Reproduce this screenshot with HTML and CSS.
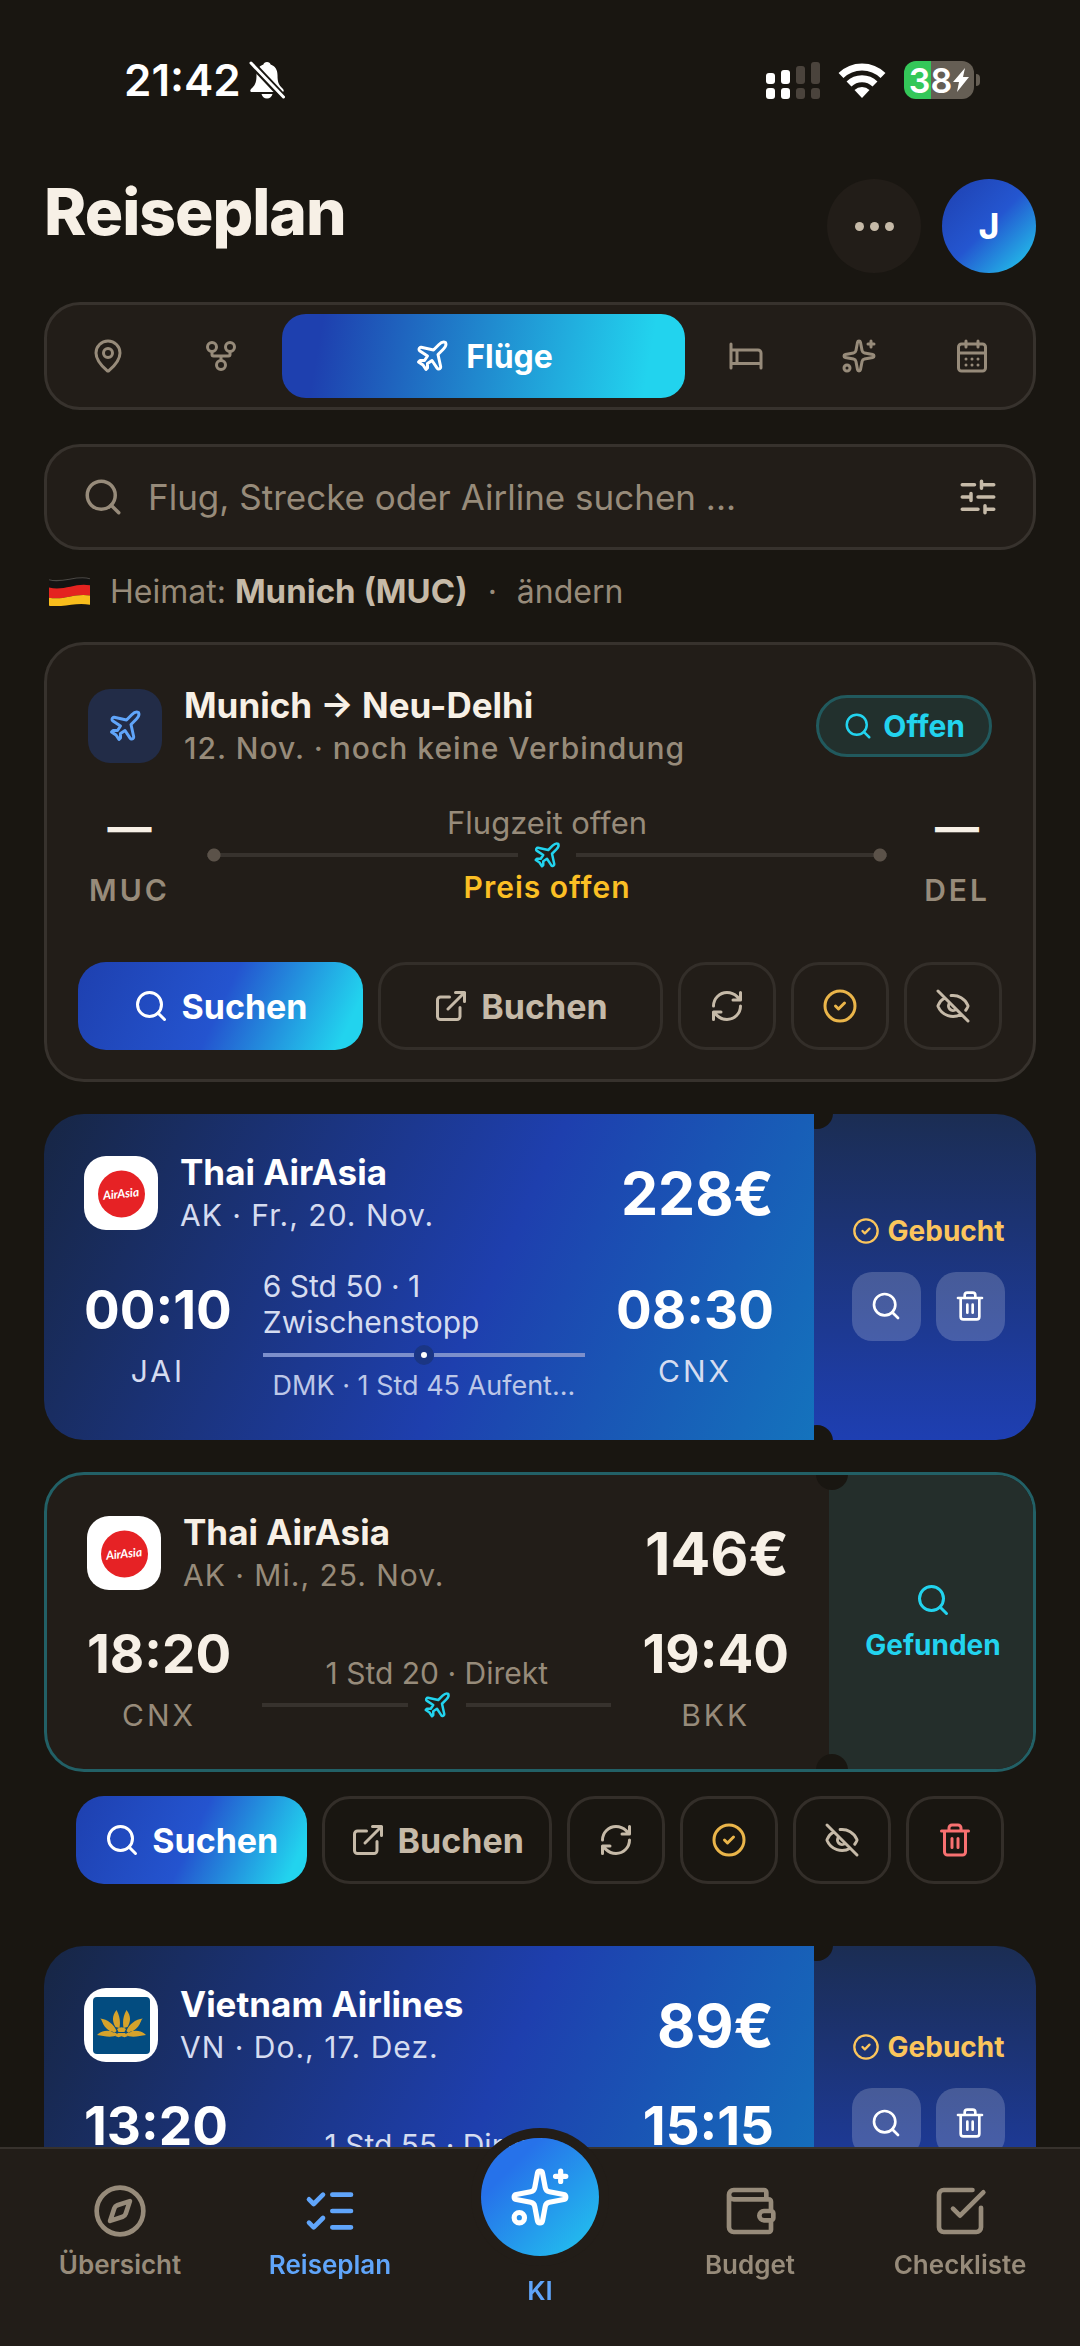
FILE: index.html
```html
<!DOCTYPE html>
<html lang="de">
<head>
<meta charset="utf-8">
<meta name="viewport" content="width=device-width, initial-scale=1">
<title>Reiseplan</title>
<link rel="stylesheet" href="styles.css">
</head>
<body>
<svg class="sprite" aria-hidden="true">
  <symbol id="i-pin" viewBox="0 0 24 24"><path d="M20 10c0 4.993-5.539 10.193-7.399 11.799a1 1 0 0 1-1.202 0C9.539 20.193 4 14.993 4 10a8 8 0 0 1 16 0"/><circle cx="12" cy="10" r="3"/></symbol>
  <symbol id="i-fork" viewBox="0 0 24 24"><circle cx="12" cy="18" r="3"/><circle cx="6" cy="6" r="3"/><circle cx="18" cy="6" r="3"/><path d="M18 9v2c0 .6-.4 1-1 1H7c-.6 0-1-.4-1-1V9M12 12v3"/></symbol>
  <symbol id="i-plane" viewBox="0 0 24 24"><path d="M17.8 19.2 16 11l3.5-3.5C21 6 21.5 4 21 3c-1-.5-3 0-4.5 1.5L13 8 4.8 6.2c-.5-.1-.9.1-1.1.5l-.3.5c-.2.5-.1 1 .3 1.3L9 12l-2 3H4l-1 1 3 2 2 3 1-1v-3l3-2 3.5 5.3c.3.4.8.5 1.3.3l.5-.2c.4-.3.6-.7.5-1.2z"/></symbol>
  <symbol id="i-bed" viewBox="0 0 24 24"><path d="M2 4v16M2 8h18a2 2 0 0 1 2 2v10M2 17h20M6 8v9"/></symbol>
  <symbol id="i-sparkles" viewBox="0 0 24 24"><path d="M11.017 2.814a1 1 0 0 1 1.966 0l1.051 5.558a2 2 0 0 0 1.594 1.594l5.558 1.051a1 1 0 0 1 0 1.966l-5.558 1.051a2 2 0 0 0-1.594 1.594l-1.051 5.558a1 1 0 0 1-1.966 0l-1.051-5.558a2 2 0 0 0-1.594-1.594l-5.558-1.051a1 1 0 0 1 0-1.966l5.558-1.051a2 2 0 0 0 1.594-1.594zM20 2v4M22 4h-4"/><circle cx="4" cy="20" r="2"/></symbol>
  <symbol id="i-calendar" viewBox="0 0 24 24"><rect x="3" y="4" width="18" height="18" rx="2"/><path d="M8 2v4M16 2v4M3 10h18M8 14h.01M12 14h.01M16 14h.01M8 18h.01M12 18h.01M16 18h.01"/></symbol>
  <symbol id="i-search" viewBox="0 0 24 24"><circle cx="11" cy="11" r="8"/><path d="m21 21-4.34-4.34"/></symbol>
  <symbol id="i-sliders" viewBox="0 0 24 24"><path d="M10 5H3M12 19H3M14 3v4M16 17v4M21 12h-9M21 19h-5M21 5h-7M8 10v4M8 12H3"/></symbol>
  <symbol id="i-external" viewBox="0 0 24 24"><path d="M15 3h6v6M10 14 21 3M18 13v6a2 2 0 0 1-2 2H5a2 2 0 0 1-2-2V8a2 2 0 0 1 2-2h6"/></symbol>
  <symbol id="i-refresh" viewBox="0 0 24 24"><path d="M3 12a9 9 0 0 1 9-9 9.75 9.75 0 0 1 6.74 2.74L21 8M21 3v5h-5M21 12a9 9 0 0 1-9 9 9.75 9.75 0 0 1-6.74-2.74L3 16M8 16H3v5"/></symbol>
  <symbol id="i-check" viewBox="0 0 24 24"><circle cx="12" cy="12" r="10"/><path d="m9 12 2 2 4-4"/></symbol>
  <symbol id="i-hide" viewBox="0 0 24 24"><path d="M10.733 5.076a10.744 10.744 0 0 1 11.205 6.575 1 1 0 0 1 0 .696 10.747 10.747 0 0 1-1.444 2.49M14.084 14.158a3 3 0 0 1-4.242-4.242M17.479 17.499a10.75 10.75 0 0 1-15.417-5.151 1 1 0 0 1 0-.696 10.75 10.75 0 0 1 4.446-5.143M2 2l20 20"/></symbol>
  <symbol id="i-trash" viewBox="0 0 24 24"><path d="M10 11v6M14 11v6M19 6v14a2 2 0 0 1-2 2H7a2 2 0 0 1-2-2V6M3 6h18M8 6V4a2 2 0 0 1 2-2h4a2 2 0 0 1 2 2v2"/></symbol>
  <symbol id="i-compass" viewBox="0 0 24 24"><circle cx="12" cy="12" r="10"/><path d="m16.24 7.76-1.804 5.411a2 2 0 0 1-1.265 1.265L7.76 16.24l1.804-5.411a2 2 0 0 1 1.265-1.265z"/></symbol>
  <symbol id="i-list" viewBox="0 0 24 24"><path d="M13 5h8M13 12h8M13 19h8M3 17l2 2 4-4M3 7l2 2 4-4"/></symbol>
  <symbol id="i-wallet" viewBox="0 0 24 24"><path d="M19 7V4a1 1 0 0 0-1-1H5a2 2 0 0 0 0 4h15a1 1 0 0 1 1 1v4h-3a2 2 0 0 0 0 4h3a1 1 0 0 0 1-1v-2a1 1 0 0 0-1-1M3 5v14a2 2 0 0 0 2 2h15a1 1 0 0 0 1-1v-4"/></symbol>
  <symbol id="i-done" viewBox="0 0 24 24"><path d="M21 10.656V19a2 2 0 0 1-2 2H5a2 2 0 0 1-2-2V5a2 2 0 0 1 2-2h12.344M9 11l3 3L22 4"/></symbol>
  <symbol id="logo-airasia" viewBox="0 0 74 74"><rect width="74" height="74" fill="#fff"/><circle cx="37.500" cy="38" r="23.500" fill="#e62225"/><text x="37" y="42" text-anchor="middle" class="logo-script" transform="rotate(-6 37 38)">AirAsia</text></symbol>
  <symbol id="logo-vietnam" viewBox="0 0 74 74"><rect width="74" height="74" fill="#fff"/><rect x="9" y="9" width="57" height="57" rx="4" fill="#034c80"/><g fill="#d5a22b"><path d="M32.500 22c-4.500 6-4.500 11-1 17l4 1c1-6 .5-12-3-18zM42.500 22c4.500 6 4.500 11 1 17l-4 1c-1-6-.5-12 3-18zM16 30.500c3 1 1.500 10 14.500 14.500l2-2c-2-6-9-12-16.500-12.500zM59 30.500c-3 1-1.500 10-14.500 14.500l-2-2c2-6 9-12 16.500-12.500zM13 47c6-6 14-5.500 21-.500-6 4-14 1.500-21 .500zM62 47c-6-6-14-5.500-21-.500 6 4 14 1.500 21 .500z"/><path d="M33 41q4.500-3.500 9 0l-1.500 3h-6zM31 48l3-3h7l3 3-3.500 1.200-3-1-3 1z"/></g></symbol>
</svg>

<div class="statusbar">
  <div class="status-left">
    <time>21:42</time>
    <svg class="status-bell" viewBox="0 0 36 38" aria-label="Stumm"><path fill="#fff" d="M18 1c-2 0-3.200 1-3.600 2.600C10 5 7.500 9 7.500 14c0 8-1.500 10-5.500 14-1.500 1.800-.5 3 1 3h30c1.500 0 2.500-1.200 1-3-4-4-5.500-6-5.500-14 0-5-2.500-9-6.900-10.400C21.200 2 20 1 18 1zM12.500 33h11c-.6 2.600-2.600 4.500-5.500 4.500S13.100 35.600 12.500 33z"/><path stroke="#191611" stroke-width="7" d="M2 2l33 35"/><path stroke="#fff" stroke-width="3" stroke-linecap="round" d="M2 2l32.500 34"/></svg>
  </div>
  <div class="status-right">
    <svg class="status-signal" viewBox="0 0 54 38" aria-label="Mobilfunk"><g fill="#fff"><rect y="12" width="9" height="11" rx="3"/><rect x="15" y="9" width="9" height="14" rx="3"/><rect y="27" width="9" height="11" rx="3"/><rect x="15" y="27" width="9" height="11" rx="3"/></g><g fill="#4a433c"><rect x="30" y="5" width="9" height="18" rx="3"/><rect x="45" y="1" width="9" height="22" rx="3"/><rect x="30" y="27" width="9" height="11" rx="3"/><rect x="45" y="27" width="9" height="11" rx="3"/></g></svg>
    <svg class="status-wifi" viewBox="0 0 48 36" aria-label="WLAN"><g fill="none" stroke="#fff" stroke-width="7"><path d="M3 13.500a30 30 0 0 1 42 0"/><path d="M11 22a18.500 18.500 0 0 1 26 0"/></g><path fill="#fff" d="M24 36l-7.500-8a11 11 0 0 1 15 0z"/></svg>
    <div class="battery"><span>38</span><svg viewBox="0 0 16 24" aria-hidden="true"><path fill="#fff" d="M12 0 0 14h6L4 24 16 9h-6z"/></svg></div>
  </div>
</div>

<main class="page">
  <header class="header">
    <h1>Reiseplan</h1>
    <div class="header-actions">
      <button class="round more" aria-label="Mehr"><i></i><i></i><i></i></button>
      <button class="round avatar" aria-label="Profil">J</button>
    </div>
  </header>

  <nav class="tabs" aria-label="Bereiche">
    <button class="tab" aria-label="Orte"><svg class="ico"><use href="#i-pin"/></svg></button>
    <button class="tab" aria-label="Routen"><svg class="ico"><use href="#i-fork"/></svg></button>
    <button class="tab tab-active"><svg class="ico"><use href="#i-plane"/></svg>Flüge</button>
    <button class="tab" aria-label="Unterkünfte"><svg class="ico"><use href="#i-bed"/></svg></button>
    <button class="tab" aria-label="Aktivitäten"><svg class="ico"><use href="#i-sparkles"/></svg></button>
    <button class="tab" aria-label="Kalender"><svg class="ico"><use href="#i-calendar"/></svg></button>
  </nav>

  <div class="search">
    <svg class="ico ico-l"><use href="#i-search"/></svg>
    <input type="text" aria-label="Flugsuche" placeholder="Flug, Strecke oder Airline suchen ...">
    <button class="filter" aria-label="Filter"><svg class="ico ico-l"><use href="#i-sliders"/></svg></button>
  </div>

  <div class="home">
    <svg class="flag" viewBox="0 0 40 28" aria-label="Deutschland"><path fill="#141312" d="M0 2c14 4 26-5 40-1v8c-14-3-26 6-40 2z"/><path fill="none" stroke="#4b4844" d="M0 2.500c14 4 26-5 40-1"/><path fill="#e42320" d="M0 10c14 4 26-5 40-2v10c-14-3-26 5-40 2z"/><path fill="#f8bd1c" d="M0 20c14 3 26-5 40-2v9c-14-3-26 3-40 1z"/></svg>
    <span>Heimat: <b>Munich (MUC)</b></span>
    <span>·</span>
    <button class="link">ändern</button>
  </div>

  <article class="card open">
    <div class="open-head">
      <span class="planebox"><svg class="ico"><use href="#i-plane"/></svg></span>
      <div class="carrier">
        <h2>Munich → Neu-Delhi</h2>
        <p class="medium">12. Nov. · noch keine Verbindung</p>
      </div>
      <span class="pill"><svg class="ico ico-s"><use href="#i-search"/></svg>Offen</span>
    </div>
    <div class="route open-route">
      <div class="stop"><strong class="blank">—</strong><span>MUC</span></div>
      <div class="leg">
        <span>Flugzeit offen</span>
        <div class="track dots"><svg class="ico ico-s"><use href="#i-plane"/></svg></div>
        <span class="price-open">Preis offen</span>
      </div>
      <div class="stop"><strong class="blank">—</strong><span>DEL</span></div>
    </div>
    <div class="actions">
      <button class="btn primary"><svg class="ico"><use href="#i-search"/></svg>Suchen</button>
      <button class="btn"><svg class="ico"><use href="#i-external"/></svg>Buchen</button>
      <button class="btn square" aria-label="Aktualisieren"><svg class="ico"><use href="#i-refresh"/></svg></button>
      <button class="btn square gold" aria-label="Als gebucht markieren"><svg class="ico"><use href="#i-check"/></svg></button>
      <button class="btn square" aria-label="Ausblenden"><svg class="ico"><use href="#i-hide"/></svg></button>
    </div>
  </article>

  <article class="card ticket booked">
    <div class="ticket-main">
      <div class="ticket-head">
        <svg class="logo" role="img" aria-label="AirAsia"><use href="#logo-airasia"/></svg>
        <div class="carrier"><h2>Thai AirAsia</h2><p>AK · Fr., 20. Nov.</p></div>
        <strong class="price">228€</strong>
      </div>
      <div class="route">
        <div class="stop"><strong>00:10</strong><span>JAI</span></div>
        <div class="leg via">
          <span>6 Std 50 · 1 Zwischenstopp</span>
          <div class="track"><i></i></div>
          <small>DMK · 1 Std 45 Aufent...</small>
        </div>
        <div class="stop"><strong>08:30</strong><span>CNX</span></div>
      </div>
    </div>
    <div class="stub">
      <span class="state"><svg class="ico ico-xs"><use href="#i-check"/></svg>Gebucht</span>
      <div class="stub-actions">
        <button aria-label="Suchen"><svg class="ico"><use href="#i-search"/></svg></button>
        <button aria-label="Löschen"><svg class="ico"><use href="#i-trash"/></svg></button>
      </div>
    </div>
  </article>

  <article class="card ticket found">
    <div class="ticket-main">
      <div class="ticket-head">
        <svg class="logo" role="img" aria-label="AirAsia"><use href="#logo-airasia"/></svg>
        <div class="carrier"><h2>Thai AirAsia</h2><p>AK · Mi., 25. Nov.</p></div>
        <strong class="price">146€</strong>
      </div>
      <div class="route">
        <div class="stop"><strong>18:20</strong><span>CNX</span></div>
        <div class="leg direct">
          <span>1 Std 20 · Direkt</span>
          <div class="track"><svg class="ico ico-s"><use href="#i-plane"/></svg></div>
        </div>
        <div class="stop"><strong>19:40</strong><span>BKK</span></div>
      </div>
    </div>
    <div class="stub">
      <svg class="ico"><use href="#i-search"/></svg>
      <span class="state">Gefunden</span>
    </div>
  </article>
  <div class="actions loose">
    <button class="btn primary"><svg class="ico"><use href="#i-search"/></svg>Suchen</button>
    <button class="btn"><svg class="ico"><use href="#i-external"/></svg>Buchen</button>
    <button class="btn square" aria-label="Aktualisieren"><svg class="ico"><use href="#i-refresh"/></svg></button>
    <button class="btn square gold" aria-label="Als gebucht markieren"><svg class="ico"><use href="#i-check"/></svg></button>
    <button class="btn square" aria-label="Ausblenden"><svg class="ico"><use href="#i-hide"/></svg></button>
    <button class="btn square red" aria-label="Löschen"><svg class="ico"><use href="#i-trash"/></svg></button>
  </div>

  <article class="card ticket booked">
    <div class="ticket-main">
      <div class="ticket-head">
        <svg class="logo" role="img" aria-label="Vietnam Airlines"><use href="#logo-vietnam"/></svg>
        <div class="carrier"><h2>Vietnam Airlines</h2><p>VN · Do., 17. Dez.</p></div>
        <strong class="price">89€</strong>
      </div>
      <div class="route">
        <div class="stop"><strong>13:20</strong></div>
        <div class="leg direct">
          <span>1 Std 55 · Direkt</span>
          <div class="track"></div>
        </div>
        <div class="stop"><strong>15:15</strong></div>
      </div>
    </div>
    <div class="stub">
      <span class="state"><svg class="ico ico-xs"><use href="#i-check"/></svg>Gebucht</span>
      <div class="stub-actions">
        <button aria-label="Suchen"><svg class="ico"><use href="#i-search"/></svg></button>
        <button aria-label="Löschen"><svg class="ico"><use href="#i-trash"/></svg></button>
      </div>
    </div>
  </article>
</main>

<nav class="tabbar" aria-label="Hauptnavigation">
  <a href="#uebersicht"><svg class="ico ico-xl"><use href="#i-compass"/></svg>Übersicht</a>
  <a href="#reiseplan" class="current"><svg class="ico ico-xl"><use href="#i-list"/></svg>Reiseplan</a>
  <a href="#ki" class="current ai"><span class="fab"><svg class="ico"><use href="#i-sparkles"/></svg></span>KI</a>
  <a href="#budget"><svg class="ico ico-xl"><use href="#i-wallet"/></svg>Budget</a>
  <a href="#checkliste"><svg class="ico ico-xl"><use href="#i-done"/></svg>Checkliste</a>
</nav>
</body>
</html>
```
FILE: styles.css
```css
:root {
  --bg: #191611;
  --surface: #221d18;
  --line: #37322d;
  --text: #f7f0e6;
  --soft: #c6baa8;
  --muted: #978b7a;
  --cyan: #22d3ee;
  --blue: #60a5fa;
  --gold: #eab54a;
}

* { box-sizing: border-box; }

body {
  margin: 0;
  min-height: 100vh;
  background: var(--bg);
  color: var(--text);
  font-family: Inter, "Liberation Sans", sans-serif;
  font-size: 30px;
}

h1, h2, p { margin: 0; }

button, input {
  margin: 0;
  padding: 0;
  border: 0;
  background: none;
  color: inherit;
  font: inherit;
}

.sprite { display: none; }

.ico {
  width: 36px;
  height: 36px;
  flex: none;
  fill: none;
  stroke: currentColor;
  stroke-width: 2;
  stroke-linecap: round;
  stroke-linejoin: round;
}
.ico-xs { width: 28px; height: 28px; }
.ico-s { width: 30px; height: 30px; }
.ico-l { width: 42px; height: 42px; }
.ico-xl { width: 56px; height: 56px; }

/* status bar */
.statusbar {
  display: flex;
  justify-content: space-between;
  align-items: center;
  height: 160px;
  padding: 0 100px 0 124px;
  color: #fff;
}
.status-left, .status-right { display: flex; align-items: center; }
.status-left { gap: 8px; font-size: 44px; font-weight: 600; }
.status-right { gap: 18px; }
.status-bell { width: 36px; height: 38px; }
.status-signal { width: 54px; height: 38px; }
.status-wifi { width: 48px; height: 36px; }
.battery {
  position: relative;
  display: flex;
  align-items: center;
  justify-content: center;
  gap: 1px;
  width: 70px;
  height: 38px;
  margin-right: 6px;
  border-radius: 12px;
  background: linear-gradient(90deg, #34c759 38%, #655e54 38%);
  font-size: 34px;
  font-weight: 600;
}
.battery svg { width: 16px; height: 24px; }
.battery::after {
  content: "";
  position: absolute;
  left: 72px;
  width: 4px;
  height: 12px;
  border-radius: 0 4px 4px 0;
  background: #655e54;
}

/* header */
.page { padding: 19px 44px 100px; }
.header { display: flex; justify-content: space-between; }
h1 { font-size: 64px; line-height: 66px; font-weight: 800; letter-spacing: -1px; }
.header-actions { display: flex; gap: 21px; }
.round {
  display: flex;
  align-items: center;
  justify-content: center;
  gap: 6px;
  width: 94px;
  height: 94px;
  border-radius: 50%;
}
.more { background: var(--surface); }
.more i { width: 9px; height: 9px; border-radius: 50%; background: var(--soft); }
.avatar {
  background: linear-gradient(135deg, #1e40af, #2456d0 50%, #22d3ee);
  color: #fff;
  font-size: 36px;
  font-weight: 700;
}

/* section tabs */
.tabs {
  display: flex;
  gap: 9px;
  margin-top: 29px;
  padding: 9px;
  border: 3px solid var(--line);
  border-radius: 36px;
  background: var(--surface);
}
.tab {
  display: flex;
  align-items: center;
  justify-content: center;
  gap: 16px;
  width: 104px;
  height: 84px;
  border-radius: 24px;
  color: var(--muted);
}
.tab-active {
  flex: 1;
  background: linear-gradient(100deg, #1e40af 10%, #22d3ee 90%);
  color: #fff;
  font-size: 32px;
  font-weight: 700;
}

/* search */
.search {
  display: flex;
  align-items: center;
  gap: 24px;
  height: 106px;
  margin-top: 34px;
  padding: 0 34px 0 35px;
  border: 3px solid var(--line);
  border-radius: 36px;
  background: var(--surface);
  color: var(--muted);
}
.search input { flex: 1; min-width: 0; height: 60px; font-size: 35px; outline: 0; }
.search input::placeholder { color: var(--muted); opacity: 1; }
.filter { display: flex; color: var(--soft); }

.home {
  display: flex;
  align-items: center;
  gap: 20px;
  height: 40px;
  margin: 21px 0 31px;
  padding-left: 5px;
  color: var(--muted);
  font-size: 32px;
}
.home b { color: var(--soft); font-size: 33px; font-weight: 700; }
.flag { width: 41px; height: 29px; }

/* cards */
.card { border-radius: 40px; overflow: hidden; margin-bottom: 32px; }
h2 { font-size: 35px; line-height: 44px; font-weight: 700; }
.carrier { flex: 1; min-width: 0; }
.carrier p { color: var(--muted); font-size: 30px; line-height: 42px; letter-spacing: 1px; }
.carrier .medium { font-weight: 500; }

.open { padding: 44px 31px 29px; border: 3px solid var(--line); background: var(--surface); }
.open-head { display: flex; align-items: center; gap: 22px; padding: 0 10px; height: 74px; }
.planebox {
  display: flex;
  align-items: center;
  justify-content: center;
  width: 74px;
  height: 74px;
  border-radius: 22px;
  background: #222c47;
  color: var(--blue);
}
.pill {
  display: flex;
  align-items: center;
  gap: 10px;
  height: 62px;
  padding: 0 24px;
  border: 3px solid #21595d;
  border-radius: 31px;
  background: #22302d;
  color: var(--cyan);
  font-weight: 700;
}

.route { display: flex; align-items: center; gap: 31px; }
.stop { display: flex; flex-direction: column; align-items: center; gap: 19px; min-height: 103px; }
.stop strong { font-size: 53px; line-height: 52px; font-weight: 700; }
.stop span { color: var(--muted); font-size: 30px; line-height: 32px; letter-spacing: 3px; }
.leg { display: flex; flex: 1; min-width: 0; flex-direction: column; align-items: center; color: var(--muted); }
.leg span { line-height: 36px; }
.track { display: flex; align-items: center; width: 100%; height: 28px; gap: 14px; color: var(--cyan); }
.track::before, .track::after { content: ""; flex: 1; height: 4px; background: #37322d; }

.open-route { gap: 37px; padding: 0 12px 0 11px; margin: 40px 0 56px; }
.open-route .stop { gap: 23px; }
.open-route .stop span { font-weight: 600; }
.stop .blank { font-size: 44px; line-height: 48px; }
.open-route .leg span { line-height: 32px; font-size: 31px; }
.open-route .leg .price-open { font-size: 30px; color: #fbbf24; font-weight: 600; letter-spacing: 1px; }
.dots { height: 32px; gap: 14px; }
.dots::before, .dots::after {
  height: 14px;
  background:
    radial-gradient(circle at 7px 7px, #5b5249 6px, transparent 7px) 0 0 / 14px 14px no-repeat,
    linear-gradient(#37322d, #37322d) center / 100% 4px no-repeat;
}
.dots::after {
  background:
    radial-gradient(circle at 7px 7px, #5b5249 6px, transparent 7px) 100% 0 / 14px 14px no-repeat,
    linear-gradient(#37322d, #37322d) center / 100% 4px no-repeat;
}

/* action rows */
.actions { display: flex; gap: 15px; }
.btn {
  display: flex;
  flex: 1;
  align-items: center;
  justify-content: center;
  gap: 12px;
  height: 88px;
  border: 3px solid #332e29;
  border-radius: 28px;
  color: var(--soft);
  font-size: 34px;
  font-weight: 700;
}
.primary {
  padding: 0 3px;
  border: 0;
  background: linear-gradient(115deg, #1e40af, #2454cf 50%, #22d3ee 92%);
  color: #fff;
}
.square { flex: none; width: 98px; }
.gold { color: var(--gold); }
.red { color: #f87171; }
.loose { margin: -8px 32px 62px; }

/* tickets */
.ticket { display: flex; }
.ticket-main {
  display: flex;
  flex: 1;
  min-width: 0;
  flex-direction: column;
  gap: 38px;
  padding: 42px 40px 38px 40px;
}
.ticket-head { display: flex; align-items: center; gap: 22px; height: 74px; }
.logo { width: 74px; height: 74px; border-radius: 22px; }
.logo-script { fill: #fff; font: italic 700 12px Lato, sans-serif; }
.price { font-size: 59px; font-weight: 700; }
.direct { padding-top: 14px; }

.stub {
  position: relative;
  display: flex;
  flex-direction: column;
  align-items: center;
  justify-content: center;
  overflow: hidden;
}
.stub::before, .stub::after {
  content: "";
  position: absolute;
  left: -13px;
  width: 32px;
  height: 32px;
  border-radius: 50%;
  background: var(--bg);
}
.stub::before { top: -17px; }
.stub::after { bottom: -17px; }
.state { display: flex; align-items: center; gap: 8px; font-size: 28px; line-height: 34px; font-weight: 700; }

.booked { color: #fff; }
.booked .ticket-main { background: linear-gradient(115deg, #172644, #1e3fae 57%, #1473bd); }
.booked .carrier p, .booked .stop span, .booked .leg { color: #d5dcf0; }
.booked .stub {
  width: 222px;
  gap: 24px;
  padding-left: 6px;
  background: linear-gradient(#1b2d53, #1e3fb2);
}
.booked .state { color: #fbc55c; }
.stub-actions { display: flex; gap: 15px; }
.stub-actions button {
  display: flex;
  align-items: center;
  justify-content: center;
  width: 69px;
  height: 69px;
  border-radius: 20px;
  background: #ffffff30;
}
.stub-actions .ico { width: 32px; height: 32px; }

.via { gap: 5px; }
.via span { align-self: stretch; }
.via small { font-size: 27px; line-height: 32px; color: #bcc7e8; white-space: nowrap; }
.via .track { height: 20px; gap: 0; }
.booked .track::before, .booked .track::after { background: #7c8fcc; }
.via i { width: 20px; height: 20px; border: 7px solid #1b3684; border-radius: 50%; background: #fff; }

.found { border: 3px solid #226066; background: var(--surface); }
.found .ticket-main { padding-top: 41px; }
.found .stub { width: 204px; gap: 10px; padding-left: 4px; background: #242e2b; color: var(--cyan); overflow: visible; }

/* bottom navigation */
.tabbar {
  position: fixed;
  right: 0;
  bottom: 0;
  left: 0;
  display: flex;
  align-items: flex-start;
  height: 199px;
  padding: 0 15px;
  border-top: 2px solid var(--line);
  background: var(--surface);
}
.tabbar a {
  display: flex;
  flex: 1;
  flex-direction: column;
  align-items: center;
  gap: 10px;
  padding-top: 34px;
  color: var(--muted);
  font-size: 26px;
  line-height: 32px;
  font-weight: 600;
  text-decoration: none;
}
.tabbar .current { color: var(--blue); }
.tabbar .ai { gap: 19px; margin-top: -11px; padding-top: 0; }
.fab {
  display: flex;
  align-items: center;
  justify-content: center;
  width: 118px;
  height: 118px;
  border-radius: 50%;
  background: linear-gradient(135deg, #2672ea 25%, #22c8ee);
  box-shadow: 0 0 0 10px var(--surface);
  color: #fff;
}
.fab .ico { width: 62px; height: 62px; }
```
